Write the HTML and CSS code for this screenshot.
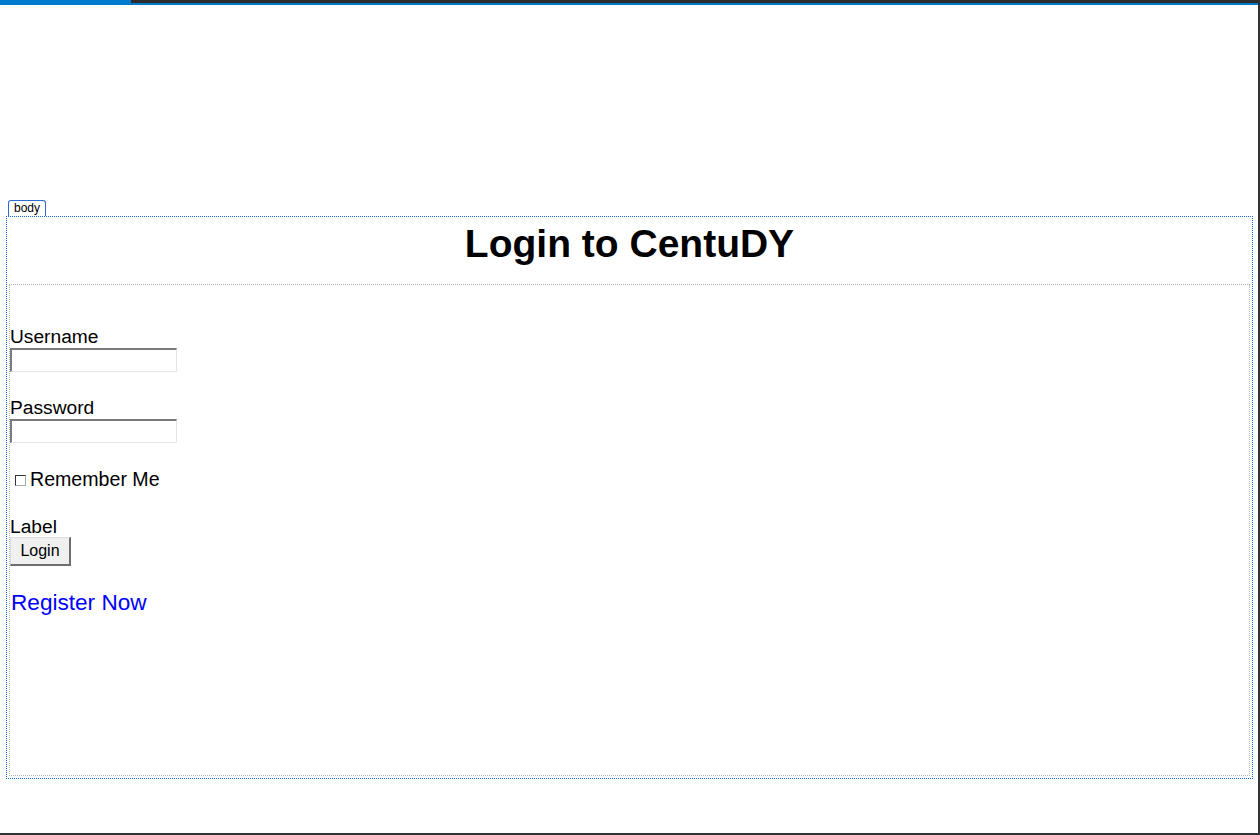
FILE: index.html
```html
<!DOCTYPE html>
<html>
<head>
<meta charset="utf-8">
<title>Login to CentuDY</title>
<link rel="stylesheet" href="styles.css">
</head>
<body>
<div class="frame">
  <div class="topbar">
    <div class="tab-active"></div>
    <div class="tab-rest"></div>
  </div>
  <div class="tag-label">body</div>
  <div class="body-box">
    <h1 class="title">Login to CentuDY</h1>
    <div class="form-box">
      <div class="field">
        <div class="field-label">Username</div>
        <input class="text-input" type="text">
      </div>
      <div class="field">
        <div class="field-label">Password</div>
        <input class="text-input" type="password">
      </div>
      <div class="check-row">
        <input class="check" type="checkbox"><span>Remember Me</span>
      </div>
      <div class="msg-label">Label</div>
      <button class="login-btn" type="button">Login</button>
      <div class="register-row"><a class="register" href="#">Register Now</a></div>
    </div>
  </div>
</div>
</body>
</html>
```

FILE: styles.css
```css
html, body {
  margin: 0;
  padding: 0;
  background: #ffffff;
}

.frame {
  width: 1260px;
  height: 835px;
  box-sizing: border-box;
  border-right: 2px solid #333337;
  border-bottom: 2px solid #333337;
  overflow: hidden;
  font-family: "Liberation Sans", Arial, sans-serif;
  color: #000;
}

.topbar {
  display: flex;
  height: 5px;
}

.tab-active {
  width: 131px;
  background: #007acc;
}

.tab-rest {
  flex: 1;
  box-sizing: border-box;
  background: #2d2d30;
  border-bottom: 2px solid #007acc;
}

.tag-label {
  margin: 195px 0 0 8px;
  width: 38px;
  height: 16px;
  box-sizing: border-box;
  border: 1px solid #2a6bd1;
  border-bottom: none;
  border-radius: 3px 3px 0 0;
  font-size: 12px;
  line-height: 15px;
  text-align: center;
  color: #000;
}

.body-box {
  margin-left: 6px;
  width: 1247px;
  height: 563px;
  box-sizing: border-box;
  border: 1px dotted #1a66d0;
  padding: 0 1px;
}

.title {
  margin: 4px 0 17px 0;
  height: 46px;
  font-size: 39px;
  line-height: 46px;
  font-weight: bold;
  text-align: center;
}

.form-box {
  margin: 0 1px;
  height: 492px;
  box-sizing: border-box;
  border: 1px dotted #b4b4b4;
  padding-top: 41px;
  font-size: 19.2px;
}

.field {
  margin-bottom: 25px;
}

.field-label {
  height: 22px;
  line-height: 22px;
}

.text-input {
  display: block;
  margin: 0;
  padding: 0;
  width: 167px;
  height: 24px;
  box-sizing: border-box;
  border-style: solid;
  border-width: 2px 1px 1px 2px;
  border-color: #7a7a7a #e6e6e6 #e6e6e6 #7a7a7a;
  background: #fff;
  outline: none;
}

.check-row {
  display: flex;
  align-items: center;
  height: 22px;
  line-height: 22px;
  margin-bottom: 26px;
  font-size: 19.6px;
}

.check {
  appearance: none;
  -webkit-appearance: none;
  margin: 2px 4px 0 5px;
  width: 11px;
  height: 11px;
  box-sizing: border-box;
  border-style: solid;
  border-width: 1px;
  border-color: #333 #aaa #aaa #333;
  background: #fff;
}

.msg-label {
  height: 21px;
  line-height: 21px;
}

.login-btn {
  display: block;
  margin: 0;
  width: 61px;
  height: 29px;
  box-sizing: border-box;
  padding: 0 0 1px 0;
  font-family: "Liberation Sans", Arial, sans-serif;
  font-size: 16px;
  color: #000;
  background: #f0f0f0;
  border-style: solid;
  border-width: 1px 2px 2px 1px;
  border-color: #dcdcdc #6e6e6e #6e6e6e #dcdcdc;
}

.register-row {
  margin-top: 23px;
  height: 27px;
  line-height: 27px;
  padding-left: 1px;
}

.register {
  font-size: 22.6px;
  color: #0000ff;
  text-decoration: none;
}
```
